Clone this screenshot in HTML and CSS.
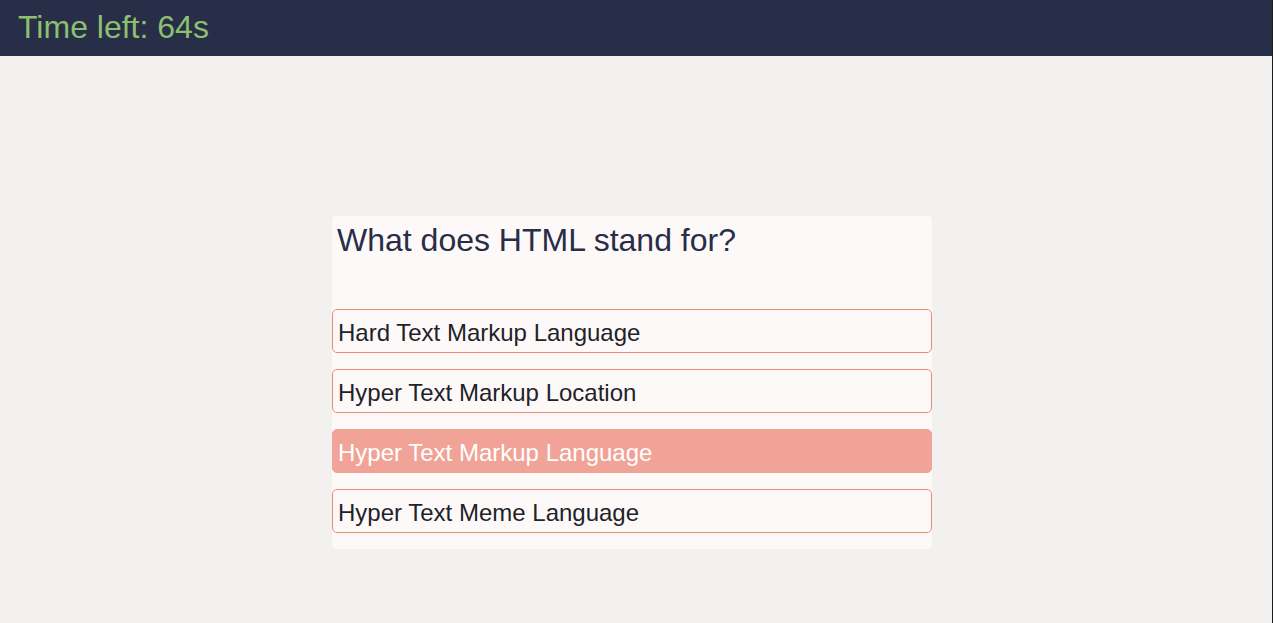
FILE: index.html
```html
<!DOCTYPE html>
<html lang="en">
<head>
<meta charset="utf-8">
<title>Quiz</title>
<link rel="stylesheet" href="styles.css">
</head>
<body>
<div class="page">
  <header class="topbar">
    <span class="timer">Time left: 64s</span>
  </header>
  <main class="main">
    <section class="card">
      <h1 class="question">What does HTML stand for?</h1>
      <div class="options">
        <button class="option">Hard Text Markup Language</button>
        <button class="option">Hyper Text Markup Location</button>
        <button class="option selected">Hyper Text Markup Language</button>
        <button class="option">Hyper Text Meme Language</button>
      </div>
    </section>
  </main>
</div>
</body>
</html>
```
FILE: styles.css
```css
html, body {
  margin: 0;
  padding: 0;
  height: 100%;
  overflow: hidden;
}
body {
  font-family: "Liberation Sans", Arial, sans-serif;
  background: #f2f1ef;
}
.page {
  height: 100%;
  border-right: 1px solid #1c1c1c;
  display: flex;
  flex-direction: column;
}
.topbar {
  height: 56px;
  box-sizing: border-box;
  background: #282d48;
  display: flex;
  align-items: center;
  padding: 0 0 3px 18px;
  flex-shrink: 0;
}
.timer {
  color: #8bc06f;
  font-size: 32px;
  line-height: 1;
}
.main {
  flex: 1;
  display: flex;
  justify-content: center;
  align-items: flex-start;
  padding: 160px 8px 0 0;
}
.card {
  width: 600px;
  background: #fdf9f8;
  border-radius: 5px;
  padding: 0 0 16px;
}
.question {
  margin: 0;
  padding: 8px 5px 0;
  height: 93px;
  box-sizing: border-box;
  font-size: 32px;
  font-weight: normal;
  color: #282d48;
  line-height: 32px;
}
.options {
  display: flex;
  flex-direction: column;
  gap: 16px;
}
.option {
  display: block;
  width: 100%;
  height: 44px;
  box-sizing: border-box;
  text-align: left;
  padding: 3px 5px 0;
  font-family: "Liberation Sans", Arial, sans-serif;
  font-size: 24px;
  color: #1f2329;
  background: #fdf9f8;
  border: 1px solid #f08a70;
  border-radius: 5px;
  cursor: pointer;
}
.option.selected {
  background: #f2a397;
  border-color: #f2a397;
  color: #ffffff;
}
```
